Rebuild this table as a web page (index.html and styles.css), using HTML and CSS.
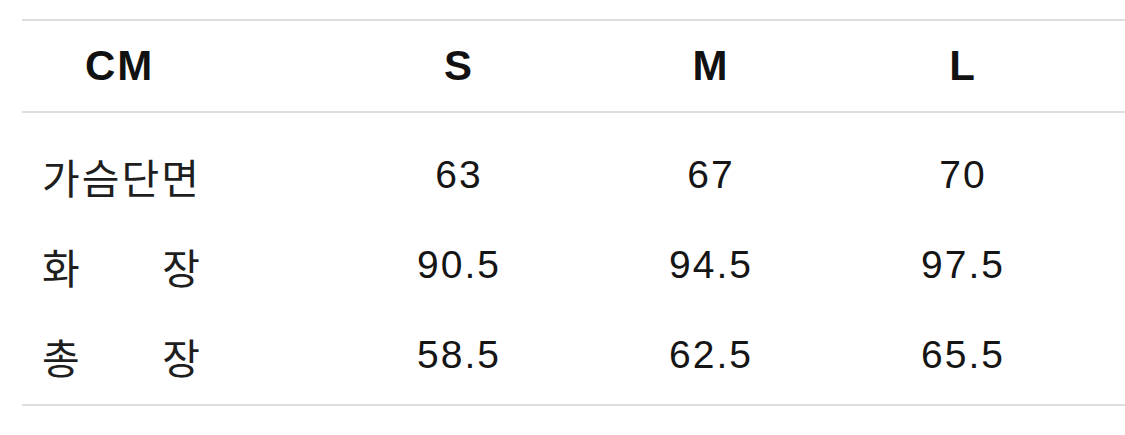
FILE: index.html
```html
<!DOCTYPE html>
<html lang="ko">
<head>
<meta charset="utf-8">
<title>Size</title>
<link rel="stylesheet" href="styles.css">
</head>
<body>
<div class="wrap">
  <table class="size-table">
    <colgroup>
      <col class="c-label">
      <col class="c-size">
      <col class="c-size">
      <col class="c-size">
      <col class="c-rest">
    </colgroup>
    <thead>
      <tr>
        <th class="h-label">CM</th>
        <th class="h-size">S</th>
        <th class="h-size">M</th>
        <th class="h-size">L</th>
        <th></th>
      </tr>
    </thead>
    <tbody>
      <tr class="first">
        <td class="label"><div class="label-box"><span>가슴단면</span></div></td>
        <td class="num">63</td>
        <td class="num">67</td>
        <td class="num">70</td>
        <td></td>
      </tr>
      <tr>
        <td class="label"><div class="label-box"><span>화</span><span>장</span></div></td>
        <td class="num">90.5</td>
        <td class="num">94.5</td>
        <td class="num">97.5</td>
        <td></td>
      </tr>
      <tr class="last">
        <td class="label"><div class="label-box"><span>총</span><span>장</span></div></td>
        <td class="num">58.5</td>
        <td class="num">62.5</td>
        <td class="num">65.5</td>
        <td></td>
      </tr>
    </tbody>
  </table>
</div>
</body>
</html>
```

FILE: styles.css
```css
html, body {
  margin: 0;
  padding: 0;
  background: #ffffff;
}

body {
  width: 1125px;
  height: 435px;
  overflow: hidden;
  font-family: "Liberation Sans", Arial, "Noto Sans CJK KR", sans-serif;
  color: #1a1a1a;
}

.wrap {
  padding: 19px 0 0 22px;
}

.size-table {
  width: 1103px;
  border-collapse: collapse;
  table-layout: fixed;
  border-top: 2px solid #dedede;
  border-bottom: 2px solid #dedede;
}

.c-label { width: 310px; }
.c-size { width: 252px; }

thead tr {
  height: 92px;
  border-bottom: 2px solid #dedede;
}

th {
  padding: 0;
  font-weight: 700;
  font-size: 42px;
  letter-spacing: 2px;
  color: #111111;
  vertical-align: middle;
}

.h-label {
  text-align: left;
  padding-left: 63px;
}

.h-size {
  text-align: center;
  padding-left: 2px;
}

td {
  padding: 0;
  height: 90px;
  vertical-align: middle;
}

tbody tr.first td {
  padding-top: 17px;
}

tbody tr.last td {
  padding-bottom: 4px;
}

.label {
  padding-left: 20px;
}

.label-box {
  width: 160px;
  display: flex;
  justify-content: space-between;
  font-family: "Noto Sans CJK KR", sans-serif;
  font-size: 41px;
  letter-spacing: 2px;
  font-weight: 400;
  color: #1e1e1e;
  line-height: 1.2;
  padding-top: 3px;
}

.num {
  text-align: center;
  font-size: 39px;
  letter-spacing: 2px;
  padding-left: 2px;
  color: #151515;
}
```
